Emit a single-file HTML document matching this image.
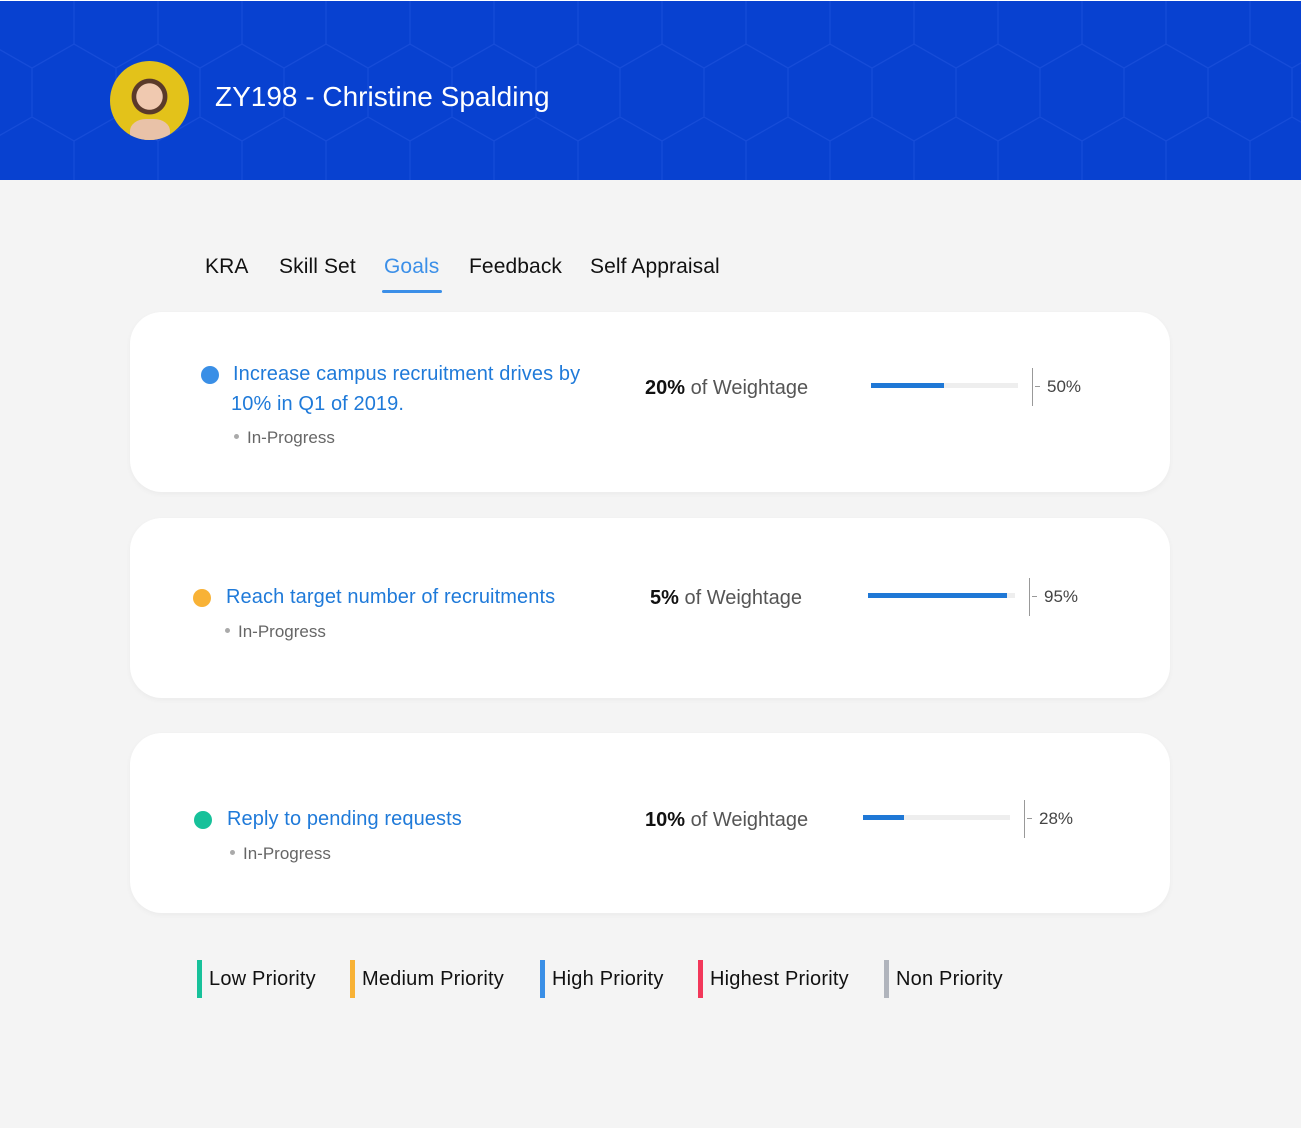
<!DOCTYPE html>
<html><head><meta charset="utf-8"><style>
*{margin:0;padding:0;box-sizing:border-box}
body{width:1301px;height:1128px;background:#f4f4f4;font-family:"Liberation Sans",sans-serif;position:relative;overflow:hidden}
.hdr{position:absolute;left:0;top:1px;width:1301px;height:179px;background:#0841d0;overflow:hidden}
.a{position:absolute;white-space:nowrap}
.card{position:absolute;left:130px;width:1040px;background:#fff;border-radius:32px;box-shadow:0 2px 6px rgba(0,0,0,.04)}
.t{color:#1f7ad9;font-size:20px;letter-spacing:0.1px}
.st{color:#666;font-size:17px}
.st:before{content:"";display:inline-block;width:5px;height:5px;border-radius:50%;background:#aaa;margin-right:8px;vertical-align:middle;position:relative;top:-2px}
.w{font-size:20px;color:#555;letter-spacing:0px}
.w b{color:#111}
.bar{position:absolute;height:5px;background:#eee}
.bar i{position:absolute;left:0;top:0;height:5px;background:#1f78d6}
.vl{position:absolute;width:1px;height:38px;background:#999}
.pct{font-size:17px;color:#444}
.dot{position:absolute;width:18px;height:18px;border-radius:50%}
.leg{position:absolute;top:960px;height:38px;font-size:20px;color:#111;padding-left:12px;line-height:38px;letter-spacing:0.2px}
.leg:before{content:"";position:absolute;left:0;top:0;width:5px;height:38px}
.tab{font-size:21px;color:#111;letter-spacing:0.1px}
</style></head><body>
<div style="position:absolute;left:0;top:0;width:1301px;height:1px;background:#fff"></div>
<div class="hdr">
<svg width="1301" height="179" style="position:absolute;left:0;top:0">
<defs><pattern id="h" width="84" height="146" patternUnits="userSpaceOnUse" x="-10" y="-30">
<path d="M0 24 L42 0 L84 24 M42 0 L42 -24 M0 24 L0 73 L42 97 L84 73 L84 24 M42 97 L42 146" fill="none" stroke="#164cd8" stroke-width="1.2"/>
</pattern></defs>
<rect width="1301" height="179" fill="url(#h)"/>
</svg>
<div class="a" style="left:110px;top:60px;width:79px;height:79px;border-radius:50%;background:radial-gradient(circle at 50% 45%,#f0c9b0 0 22%,#5a3a2a 23% 30%,#e3c21a 31%);overflow:hidden">
<div style="position:absolute;left:20px;top:58px;width:40px;height:30px;background:#e9c2a8;border-radius:40% 40% 0 0"></div></div>
<div class="a" style="left:215px;top:80px;font-size:28px;color:#fff">ZY198 - Christine Spalding</div>
</div>

<div class="a tab" style="left:205px;top:255px">KRA</div>
<div class="a tab" style="left:279px;top:255px">Skill Set</div>
<div class="a tab" style="left:384px;top:255px;color:#3b8fe8">Goals</div>
<div class="a" style="left:382px;top:290px;width:60px;height:3px;background:#3b8fe8;border-radius:2px"></div>
<div class="a tab" style="left:469px;top:255px">Feedback</div>
<div class="a tab" style="left:590px;top:255px">Self Appraisal</div>

<div class="card" style="top:312px;height:180px"></div>
<div class="dot" style="left:201px;top:366px;background:#3a8fe6"></div>
<div class="a t" style="left:233px;top:363px">Increase campus recruitment drives by</div>
<div class="a t" style="left:231px;top:393px">10% in Q1 of 2019.</div>
<div class="a st" style="left:234px;top:428px">In-Progress</div>
<div class="a w" style="left:645px;top:377px"><b>20%</b> of Weightage</div>
<div class="bar" style="left:871px;top:383px;width:147px"><i style="width:73px"></i></div>
<div class="vl" style="left:1032px;top:368px"></div>
<div class="a" style="left:1035px;top:386px;width:5px;height:1px;background:#999"></div>
<div class="a pct" style="left:1047px;top:377px">50%</div>

<div class="card" style="top:518px;height:180px"></div>
<div class="dot" style="left:193px;top:589px;background:#f8b236"></div>
<div class="a t" style="left:226px;top:586px">Reach target number of recruitments</div>
<div class="a st" style="left:225px;top:622px">In-Progress</div>
<div class="a w" style="left:650px;top:587px"><b>5%</b> of Weightage</div>
<div class="bar" style="left:868px;top:593px;width:147px"><i style="width:139px"></i></div>
<div class="vl" style="left:1029px;top:578px"></div>
<div class="a" style="left:1032px;top:596px;width:5px;height:1px;background:#999"></div>
<div class="a pct" style="left:1044px;top:587px">95%</div>

<div class="card" style="top:733px;height:180px"></div>
<div class="dot" style="left:194px;top:811px;background:#17c19a"></div>
<div class="a t" style="left:227px;top:808px">Reply to pending requests</div>
<div class="a st" style="left:230px;top:844px">In-Progress</div>
<div class="a w" style="left:645px;top:809px"><b>10%</b> of Weightage</div>
<div class="bar" style="left:863px;top:815px;width:147px"><i style="width:41px"></i></div>
<div class="vl" style="left:1024px;top:800px"></div>
<div class="a" style="left:1027px;top:818px;width:5px;height:1px;background:#999"></div>
<div class="a pct" style="left:1039px;top:809px">28%</div>

<style>
.l1:before{background:#17c19a}.l2:before{background:#f8b236}.l3:before{background:#3a8fe6}.l4:before{background:#f2385a}.l5:before{background:#b0b4bc}
</style>
<div class="leg l1" style="left:197px">Low Priority</div>
<div class="leg l2" style="left:350px">Medium Priority</div>
<div class="leg l3" style="left:540px">High Priority</div>
<div class="leg l4" style="left:698px">Highest Priority</div>
<div class="leg l5" style="left:884px">Non Priority</div>
</body></html>
